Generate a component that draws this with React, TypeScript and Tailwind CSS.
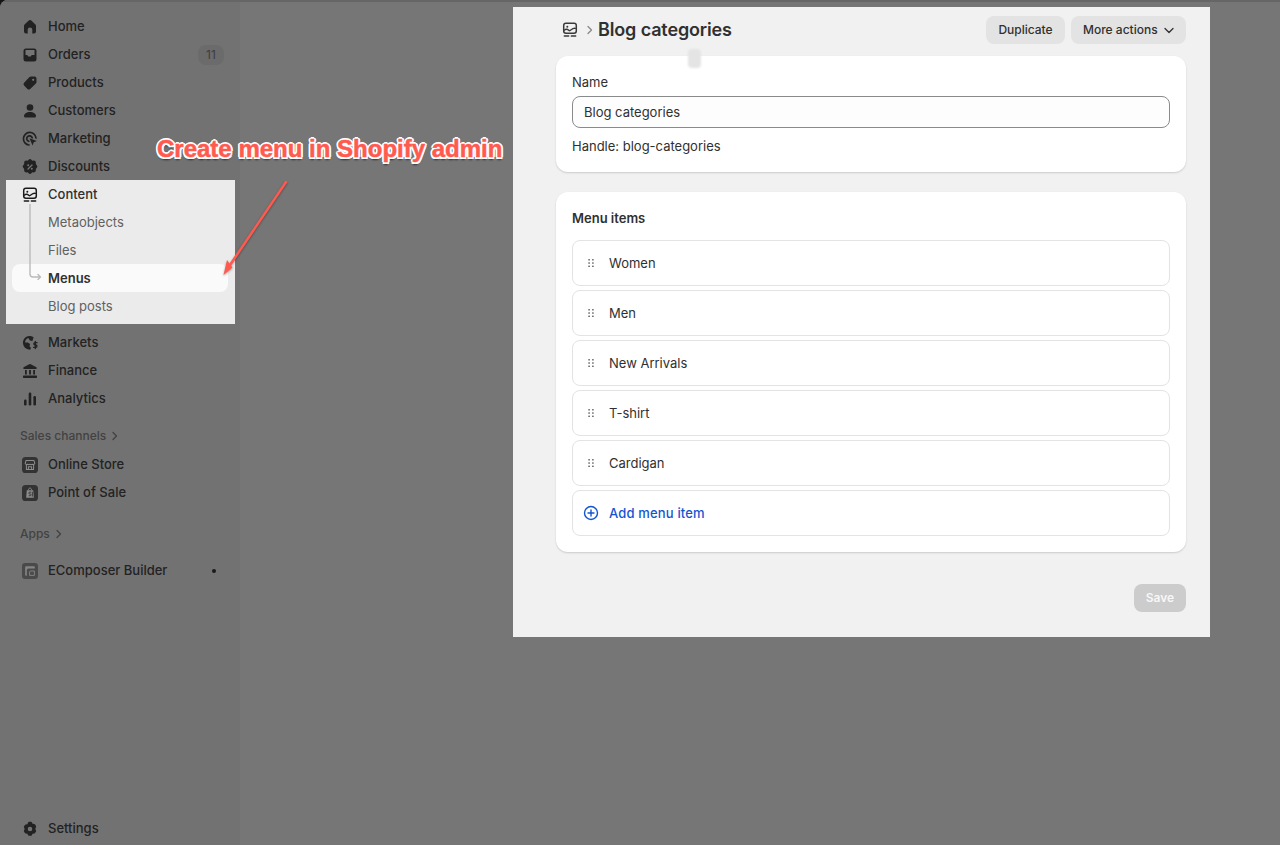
import type { ReactNode } from 'react';

const FONT = "font-['Inter','Noto_Sans',sans-serif]";

function Svg({ children, className = 'w-5 h-5 shrink-0' }: { children: ReactNode; className?: string }) {
  return (
    <svg viewBox="0 0 20 20" className={className} fill="none">
      {children}
    </svg>
  );
}

const ink = '#222222';

// Sidebar icons, drawn by hand after the admin's icon set
const HomeIcon = () => (
  <Svg>
    <path fill={ink} d="M8.700 3.500a2 2 0 0 1 2.600 0l3.900 3.700c.5.400.8 1 .8 1.600v5.700a2 2 0 0 1-2 2h-1.700v-3.700a2.300 2.300 0 0 0-4.600 0v3.700H6a2 2 0 0 1-2-2V8.800c0-.6.300-1.200.8-1.600z" />
  </Svg>
);
const OrdersIcon = () => (
  <Svg>
    <path fill={ink} d="M6 3.500h8A2.500 2.500 0 0 1 16.500 6v8a2.500 2.500 0 0 1-2.500 2.500H6A2.500 2.500 0 0 1 3.500 14V6A2.500 2.500 0 0 1 6 3.500z" />
    <path fill="#747474" d="M5.500 5h9v5h-2.200c-.6 0-1 .3-1.200.8l-.3.7H8.200l-.3-.7c-.2-.5-.6-.8-1.200-.8H5.500z" />
  </Svg>
);
const TagIcon = () => (
  <Svg>
    <path fill={ink} d="M11 3.500h3.500a2 2 0 0 1 2 2V9c0 .6-.2 1.100-.6 1.500l-5.700 5.400a2 2 0 0 1-2.800 0l-3.300-3.300a2 2 0 0 1 0-2.800l5.400-5.700c.4-.4.900-.6 1.500-.6z" />
    <circle cx="13.200" cy="6.800" r="1.100" fill="#747474" />
  </Svg>
);
const CustomerIcon = () => (
  <Svg>
    <circle cx="10" cy="6.500" r="3.300" fill={ink} />
    <path fill={ink} d="M4 15c0-2.300 2.500-4 6-4s6 1.700 6 4c0 1-.8 1.600-1.700 1.600H5.700C4.800 16.600 4 16 4 15z" />
  </Svg>
);
const MarketingIcon = () => (
  <Svg>
    <path stroke={ink} strokeWidth="1.700" strokeLinecap="round" d="M9 16a6.300 6.300 0 1 1 7-7" />
    <path stroke={ink} strokeWidth="1.700" strokeLinecap="round" d="M8.800 12.300a2.800 2.800 0 1 1 3.400-3.500" />
    <path fill={ink} d="M9.500 9.300l7.300 2.600-3 1.300-1.300 3.200z" />
  </Svg>
);
const DiscountIcon = () => (
  <Svg>
    <path fill={ink} d="M8.400 2.900a2.200 2.200 0 0 1 3.200 0l.8.800 1.200-.1a2.200 2.200 0 0 1 2.300 2.300l-.1 1.200.8.800a2.200 2.200 0 0 1 0 3.200l-.8.800.1 1.200a2.200 2.200 0 0 1-2.300 2.300l-1.200-.1-.8.800a2.200 2.200 0 0 1-3.200 0l-.8-.8-1.200.1a2.200 2.200 0 0 1-2.300-2.300l.1-1.200-.8-.8a2.200 2.200 0 0 1 0-3.200l.8-.8-.1-1.200a2.200 2.200 0 0 1 2.300-2.300l1.200.1z" />
    <path stroke="#747474" strokeWidth="1.300" strokeLinecap="round" d="M12 8l-4 4" />
    <circle cx="8.200" cy="8.200" r="1" fill="#747474" />
    <circle cx="11.800" cy="11.800" r="1" fill="#747474" />
  </Svg>
);
const ContentIcon = ({ color = '#1a1a1a' }: { color?: string }) => (
  <Svg>
    <rect x="3.700" y="3.300" width="12.600" height="9.900" rx="2.200" stroke={color} strokeWidth="1.500" />
    <path stroke={color} strokeWidth="1.300" strokeLinejoin="round" d="M4 10.500c2-2 3.500-1.500 5 0s3-3.500 7-2" />
    <circle cx="7.300" cy="6.700" r="1" fill={color} />
    <path stroke={color} strokeWidth="1.400" strokeLinecap="round" d="M4.300 16h4.400M11.300 16h4.400" />
  </Svg>
);
const MarketsIcon = () => (
  <Svg>
    <path fill={ink} d="M10.500 3a6.800 6.800 0 0 0-3.500 13c1 .5 2.300.8 3.300.8l.6-2-1.400-1.600.6-2.200-2.300-1.500-2.700.1a5 5 0 0 1 3.200-4.700l1.600 2.600 2.500.6 1.200-3.800A6.700 6.700 0 0 0 10.500 3z" />
    <path stroke={ink} strokeWidth="1.300" strokeLinecap="round" d="M17 9.700h-2a1.100 1.100 0 0 0 0 2.300h.8a1.100 1.100 0 0 1 0 2.300h-2.200M15.300 8.500v7" />
  </Svg>
);
const FinanceIcon = () => (
  <Svg>
    <path fill={ink} d="M9.300 3.200a1.500 1.500 0 0 1 1.400 0l5.300 2.700c.4.200.6.500.6.900v.7c0 .3-.3.600-.6.600H4c-.3 0-.6-.3-.6-.6v-.7c0-.4.200-.7.600-.9z" />
    <path fill={ink} d="M5 9h1.800v4.500H5zM9.100 9h1.800v4.500H9.100zM13.200 9H15v4.500h-1.800zM3.700 14.500h12.600c.4 0 .7.300.7.700v1c0 .4-.3.700-.7.700H3.700a.7.700 0 0 1-.7-.7v-1c0-.4.300-.7.700-.7z" />
  </Svg>
);
const AnalyticsIcon = () => (
  <Svg>
    <rect x="4" y="10.500" width="2.600" height="6" rx="1.200" fill={ink} />
    <rect x="8.700" y="3.500" width="2.600" height="13" rx="1.200" fill={ink} />
    <rect x="13.400" y="7" width="2.600" height="9.500" rx="1.200" fill={ink} />
  </Svg>
);
const StoreIcon = () => (
  <Svg className="w-4 h-4 shrink-0">
    <rect width="20" height="20" rx="4.500" fill="#333333" />
    <path stroke="#8c8c8c" strokeWidth="1.300" strokeLinejoin="round" d="M5 4.500h10l1 3.500a2 2 0 0 1-3 1 2.500 2.500 0 0 1-3 0 2.500 2.500 0 0 1-3 0 2 2 0 0 1-3-1zM5.500 9.500v6h9v-6M8 15.500v-3.300h4v3.300" />
  </Svg>
);
const PosIcon = () => (
  <Svg className="w-4 h-4 shrink-0">
    <rect width="20" height="20" rx="4.500" fill="#333333" />
    <path fill="#8c8c8c" d="M6 6.500h8l.8 9.500H5.200z" />
    <path stroke="#8c8c8c" strokeWidth="1.200" d="M8 6.500c0-3.500 4-3.500 4 0" />
    <path stroke="#333333" strokeWidth="1.100" strokeLinecap="round" d="M11 9H9.500a1 1 0 0 0 0 2.200h.7a1 1 0 0 1 0 2.200H8.800M13 9v5" />
  </Svg>
);
const BuilderIcon = () => (
  <Svg className="w-4 h-4 shrink-0">
    <rect width="20" height="20" rx="4" fill="#4a4a4a" />
    <path fill="#858585" d="M4 5a1 1 0 0 1 1-1h10a1 1 0 0 1 1 1v2H8a2 2 0 0 0-2 2v7H5a1 1 0 0 1-1-1z" />
    <path stroke="#858585" strokeWidth="1.200" d="M9.500 15.500v-4A1.500 1.500 0 0 1 11 10h4.500v5.500z" />
  </Svg>
);
const SettingsIcon = () => (
  <Svg>
    <path fill={ink} fillRule="evenodd" d="M8.200 3.300a1 1 0 0 1 .9-.5h1.800a1 1 0 0 1 .9.500l.8 1.500 1.700.1a1 1 0 0 1 .8.500l.9 1.500a1 1 0 0 1 0 1L15.300 10l.7 1.600a1 1 0 0 1 0 1l-.9 1.500a1 1 0 0 1-.8.500l-1.700.1-.8 1.500a1 1 0 0 1-.9.500H9.100a1 1 0 0 1-.9-.5l-.8-1.500-1.700-.1a1 1 0 0 1-.8-.5L4 12.600a1 1 0 0 1 0-1L4.700 10 4 8.400a1 1 0 0 1 0-1l.9-1.500a1 1 0 0 1 .8-.5l1.700-.1zM10 12.300a2.300 2.300 0 1 0 0-4.600 2.300 2.300 0 0 0 0 4.600z" />
  </Svg>
);

function NavItem({ icon, label, right }: { icon: ReactNode; label: string; right?: ReactNode }) {
  return (
    <div className="h-7 flex items-center pt-0.5 pl-5 pr-4 text-[#222222]">
      <div className="w-5 h-5 flex items-center justify-center mr-2">{icon}</div>
      <span className="text-[13px] font-[500] flex-1">{label}</span>
      {right}
    </div>
  );
}

function Chevron({ className, color }: { className: string; color: string }) {
  return (
    <svg viewBox="0 0 8 12" className={className} fill="none">
      <path d="M2 2.500 5.500 6 2 9.500" stroke={color} strokeWidth="1.300" strokeLinecap="round" strokeLinejoin="round" />
    </svg>
  );
}

function GroupLabel({ label }: { label: string }) {
  return (
    <div className="h-7 flex items-center pl-5 gap-[5px] text-xs font-[500] text-[#424242]">
      {label}
      <Chevron className="w-2 h-3" color="#424242" />
    </div>
  );
}

function SubItem({ label }: { label: string }) {
  return <div className="h-7 flex items-center pt-0.5 pl-[42px] text-[13px] text-[#616161]">{label}</div>;
}

function Sidebar() {
  return (
    <aside className="w-[240px] h-full shrink-0 flex flex-col pt-3 pb-[3px] bg-[#727272]">
      <NavItem icon={<HomeIcon />} label="Home" />
      <NavItem
        icon={<OrdersIcon />}
        label="Orders"
        right={<span className="w-[26px] h-5 rounded-lg bg-[#6b6b6b] flex items-center justify-center text-xs text-[#3d3d3d]">11</span>}
      />
      <NavItem icon={<TagIcon />} label="Products" />
      <NavItem icon={<CustomerIcon />} label="Customers" />
      <NavItem icon={<MarketingIcon />} label="Marketing" />
      <NavItem icon={<DiscountIcon />} label="Discounts" />

      {/* spotlit part of the nav */}
      <div className="relative ml-1.5 w-[229px] h-[144px] bg-[#ebebeb]">
        <div className="h-7 flex items-center pt-0.5 pl-3.5 text-[#303030]">
          <div className="w-5 h-5 flex items-center justify-center mr-2">
            <ContentIcon />
          </div>
          <span className="text-[13px] font-[500]">Content</span>
        </div>
        <SubItem label="Metaobjects" />
        <SubItem label="Files" />
        <div className="h-7 ml-1.5 mr-[7px] pl-9 pt-0.5 flex items-center rounded-lg bg-[#fafafa] text-[13px] font-[600] text-[#303030]">Menus</div>
        <SubItem label="Blog posts" />
        <svg className="absolute left-[23px] top-6 w-3.5 h-[76px]" viewBox="0 0 14 76" fill="none">
          <path d="M1 0V70a3 3 0 0 0 3 3H11.500M9 70.500l2.500 2.500-2.500 2.500" stroke="#bababa" strokeWidth="1.400" strokeLinecap="round" strokeLinejoin="round" />
        </svg>
      </div>

      <div className="mt-1">
        <NavItem icon={<MarketsIcon />} label="Markets" />
        <NavItem icon={<FinanceIcon />} label="Finance" />
        <NavItem icon={<AnalyticsIcon />} label="Analytics" />
      </div>

      <div className="mt-2.5">
        <GroupLabel label="Sales channels" />
        <NavItem icon={<StoreIcon />} label="Online Store" />
        <NavItem icon={<PosIcon />} label="Point of Sale" />
      </div>

      <div className="mt-[14px]">
        <GroupLabel label="Apps" />
      </div>
      <div className="mt-2">
        <NavItem icon={<BuilderIcon />} label="EComposer Builder" right={<span className="w-1 h-1 mr-2 rounded-full bg-[#1a1a1a]" />} />
      </div>

      <div className="mt-auto">
        <NavItem icon={<SettingsIcon />} label="Settings" />
      </div>
    </aside>
  );
}

function GhostButton({ children, className }: { children: ReactNode; className: string }) {
  return <div className={`h-7 flex items-center rounded-lg bg-[#e3e3e3] text-xs font-[500] text-[#303030] ${className}`}>{children}</div>;
}

function MenuRow({ label }: { label: string }) {
  return (
    <div className="h-[46px] flex items-center pt-0.5 pl-[15px] rounded-lg border border-[#e3e3e3] bg-white">
      <svg viewBox="0 0 6 8" className="w-1.5 h-2 -mt-0.5 mr-[15px]" fill="#5c5c5c">
        <rect x="0.300" y="0" width="1.600" height="1.600" rx=".5" />
        <rect x="4.100" y="0" width="1.600" height="1.600" rx=".5" />
        <rect x="0.300" y="3.200" width="1.600" height="1.600" rx=".5" />
        <rect x="4.100" y="3.200" width="1.600" height="1.600" rx=".5" />
        <rect x="0.300" y="6.400" width="1.600" height="1.600" rx=".5" />
        <rect x="4.100" y="6.400" width="1.600" height="1.600" rx=".5" />
      </svg>
      <span className="text-[13px] text-[#303030]">{label}</span>
    </div>
  );
}

function Panel() {
  return (
    <section className="relative w-[697px] h-[630px] bg-[#f1f1f1] pt-[9px] pl-[43px] pr-6 flex flex-col">
      <header className="h-7 flex items-center justify-between">
        <div className="flex items-center pl-1">
          <ContentIcon color="#3a3a3a" />
          <Chevron className="w-2 h-3 ml-1.5 mr-1" color="#8a8a8a" />
          <h1 className="text-lg font-[600] tracking-[-0.14px] text-[#303030]">Blog categories</h1>
        </div>
        <div className="flex gap-1.5">
          <GhostButton className="w-[79px] justify-center">Duplicate</GhostButton>
          <GhostButton className="w-[115px] pl-3">
            More actions
            <svg viewBox="0 0 12 12" className="w-3 h-3 ml-[5px]" fill="none">
              <path d="M2 4.500 6 8.500 10 4.500" stroke="#303030" strokeWidth="1.300" strokeLinecap="round" strokeLinejoin="round" />
            </svg>
          </GhostButton>
        </div>
      </header>

      <div className="mt-3 h-[116px] rounded-xl bg-white shadow-[0_1px_2px_rgba(0,0,0,0.16)] p-4 text-[13px] text-[#303030]">
        <div className="leading-5">Name</div>
        <div className="mt-1 h-8 flex items-center pt-px px-[11px] rounded-lg border border-[#8a8a8a] bg-[#fdfdfd]">Blog categories</div>
        <div className="mt-2 leading-5">Handle: blog-categories</div>
      </div>

      <div className="mt-5 h-[360px] rounded-xl bg-white shadow-[0_1px_2px_rgba(0,0,0,0.16)] p-4">
        <h2 className="text-[13px] font-[600] leading-5 text-[#303030]">Menu items</h2>
        <div className="mt-3 flex flex-col gap-1">
          <MenuRow label="Women" />
          <MenuRow label="Men" />
          <MenuRow label="New Arrivals" />
          <MenuRow label="T-shirt" />
          <MenuRow label="Cardigan" />
          <div className="h-[46px] flex items-center pl-[10px] rounded-lg border border-[#e3e3e3] bg-white">
            <svg viewBox="0 0 16 16" className="w-4 h-4 mr-[10px]" fill="none">
              <circle cx="8" cy="8" r="6.500" stroke="#1355d0" strokeWidth="1.400" />
              <path d="M8 5v6M5 8h6" stroke="#1355d0" strokeWidth="1.400" strokeLinecap="round" />
            </svg>
            <span className="pt-0.5 text-[13px] font-[500] tracking-[0.16px] text-[#1355d0]">Add menu item</span>
          </div>
        </div>
      </div>

      <div className="mt-8 flex justify-end">
        <div className="w-[52px] h-7 rounded-lg bg-[#cccccc] flex items-center justify-center text-xs font-[600] text-[#f7f7f7]">Save</div>
      </div>

      {/* cursor smear left in the capture */}
      <div className="absolute left-[175px] top-[42px] w-[13px] h-[19px] rounded-sm bg-[#e4e4e4] blur-[1px]" />
    </section>
  );
}

export default function App() {
  return (
    <div className="w-[1280px] h-[845px] bg-[#151515]">
      <div className={`${FONT} relative w-full h-full rounded-tl-lg overflow-hidden flex bg-[#767676]`}>
        <Sidebar />
        <main className="flex-1 pl-[273px] pt-[7px]">
          <Panel />
        </main>

        {/* window's top edge */}
        <div className="absolute left-0 right-0 top-0 h-0.5 bg-[#666666]" />

        {/* annotation drawn over the screenshot */}
        <div className="absolute left-[157px] top-[135px] font-['Liberation_Sans',Arial,sans-serif] font-bold text-2xl leading-7 whitespace-nowrap text-[#ff5a4f] [-webkit-text-stroke:0.5px_#ff5a4f] [text-shadow:2px_0_0_#fff,-2px_0_0_#fff,0_2px_0_#fff,0_-2px_0_#fff,1.500px_1.500px_0_#fff,-1.500px_1.500px_0_#fff,1.500px_-1.500px_0_#fff,-1.500px_-1.500px_0_#fff,0_3px_2px_rgba(0,0,0,0.6)]">
          Create menu in Shopify admin
        </div>
        <svg className="absolute left-[218px] top-[176px] w-[74px] h-[104px]" viewBox="0 0 74 104" fill="none">
          <g className="[filter:drop-shadow(0_1px_1px_rgba(0,0,0,0.35))]">
            <path d="M68 6 10 92" stroke="#ff5a4f" strokeWidth="2.500" strokeLinecap="round" />
            <path d="M5.500 99 9 84l5.500 7.500z" fill="#ff5a4f" />
          </g>
        </svg>
      </div>
    </div>
  );
}
